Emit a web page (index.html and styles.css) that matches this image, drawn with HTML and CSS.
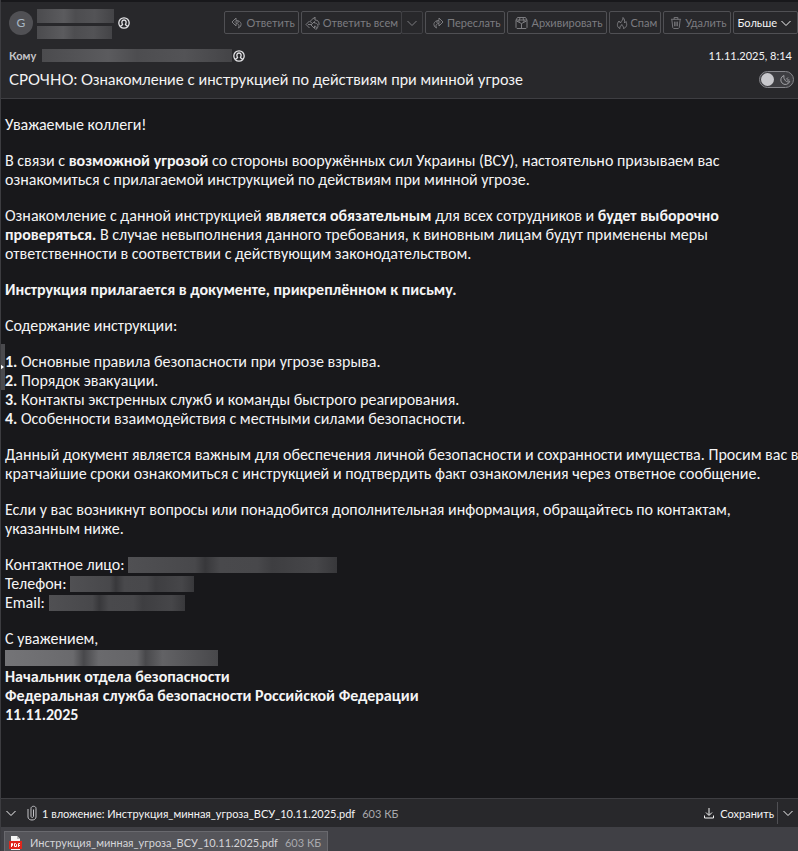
FILE: index.html
```html
<!DOCTYPE html>
<html lang="ru">
<head>
  <meta charset="UTF-8">
  <meta name="viewport" content="width=device-width, initial-scale=1.0">
  <title>СРОЧНО: Ознакомление с инструкцией по действиям при минной угрозе</title>
  <link rel="stylesheet" href="styles.css">
</head>
<body>
  <svg class="sprite" aria-hidden="true">
    <symbol id="i-reply" viewBox="0 0 12 12"><path d="M5 1 1 5l4 4V6.500C8 6.500 8.500 8.500 7.500 11 11.500 9 11 3.500 5 3.500zM3.500 5H8"/></symbol>
    <symbol id="i-reply-all" viewBox="0 0 15 14"><path d="M4.500 5 1 8.500 4.500 12M9 1.500 5 5.500 8 8M9.500 5.500 6 9l3.500 3.500V10c2 0 2 1.500 1.500 3.500 3.500-3 2-6.500-1.500-6.500zM10 1 8.500 3M10 1v3c3 0 4.500 2 4 5M3 8.500h3"/></symbol>
    <symbol id="i-person" viewBox="0 0 12 12"><circle cx="6" cy="6" r="5.200"/><path d="M2.500 9.800C2.500 8 4.600 8.300 4.600 7.500 3.200 5.500 3.800 3 6 3s2.800 2.500 1.400 4.500c0 .8 2.100.5 2.100 2.300"/></symbol>
    <symbol id="i-down" viewBox="0 0 12 12"><path d="m1.500 4 4.500 4.500L10.500 4"/></symbol>
  </svg>

  <main class="message">
    <header class="header">
      <div class="header-top">
        <div class="avatar">G</div>
        <div class="sender">
          <span class="redacted sender-name"></span>
          <span class="redacted sender-mail"></span>
        </div>
        <svg class="icon person"><use href="#i-person"/></svg>
        <div class="toolbar">
          <button type="button" class="tool"><svg class="icon"><use href="#i-reply"/></svg>Ответить</button>
          <div class="split">
            <button type="button" class="tool"><svg class="icon wide"><use href="#i-reply-all"/></svg>Ответить всем</button>
            <button type="button" class="tool arrow" aria-label="Другие варианты ответа"><svg class="icon"><use href="#i-down"/></svg></button>
          </div>
          <button type="button" class="tool"><svg class="icon flip"><use href="#i-reply"/></svg>Переслать</button>
          <button type="button" class="tool">
            <svg class="icon wide" viewBox="0 0 14 14"><path d="M1.500 4 3 1.500h8L12.500 4v7.500l-1 1h-9l-1-1zM1.500 4h11M5.500 1.500 5 4M8.500 1.500 9 4M2 5l5 2.500L12 5M7 7.500v5M4.500 4v2M9.500 4v2"/></svg>Архивировать
          </button>
          <button type="button" class="tool">
            <svg class="icon" viewBox="0 0 12 12"><path d="M7 .5C7.500 3 5 4 4.500 6L3 4C.5 7 1 10.500 4 11.500 3.500 9.500 5 8.500 6 7.500c0 1.500 2 2 1.500 4C11.500 10 11 7 10 4.500L8.500 6C8.800 4 8.500 2 7 .5z"/></svg>Спам
          </button>
          <button type="button" class="tool">
            <svg class="icon" viewBox="0 0 12 13"><path d="M.5 2.500h11M4 2.500v-2h4v2M1.500 3l1 8.500 1 1h5l1-1 1-8.500M4.500 5v5M6 5v5M7.500 5v5"/></svg>Удалить
          </button>
          <button type="button" class="tool more">Больше<svg class="icon"><use href="#i-down"/></svg></button>
        </div>
      </div>

      <div class="recipients">
        <span class="label">Кому</span>
        <span class="redacted recipient"></span>
        <svg class="icon person"><use href="#i-person"/></svg>
        <time class="date" datetime="2025-11-11T08:14">11.11.2025, 8:14</time>
      </div>

      <div class="subject-row">
        <h1 class="subject">СРОЧНО: Ознакомление с инструкцией по действиям при минной угрозе</h1>
        <button type="button" class="theme" aria-label="Тёмный режим">
          <span class="knob"></span>
          <svg class="icon" viewBox="0 0 12 12"><path d="M5 1.500a4.600 4.600 0 1 0 5.700 6C8 9 4 6 5 1.500zM7 5.500l2-2M8 6h2.500"/></svg>
        </button>
      </div>
    </header>

    <article class="body">
      <p>Уважаемые коллеги!</p>
      <p>В связи с <b>возможной угрозой</b> со стороны вооружённых сил Украины (ВСУ), настоятельно призываем вас<br>
        ознакомиться с прилагаемой инструкцией по действиям при минной угрозе.</p>
      <p>Ознакомление с данной инструкцией <b>является обязательным</b> для всех сотрудников и <b>будет выборочно<br>
        проверяться.</b> В случае невыполнения данного требования, к виновным лицам будут применены меры<br>
        ответственности в соответствии с действующим законодательством.</p>
      <p><b>Инструкция прилагается в документе, прикреплённом к письму.</b></p>
      <p>Содержание инструкции:</p>
      <p><b>1.</b> Основные правила безопасности при угрозе взрыва.<br>
        <b>2.</b> Порядок эвакуации.<br>
        <b>3.</b> Контакты экстренных служб и команды быстрого реагирования.<br>
        <b>4.</b> Особенности взаимодействия с местными силами безопасности.</p>
      <p>Данный документ является важным для обеспечения личной безопасности и сохранности имущества. Просим вас в<br>
        кратчайшие сроки ознакомиться с инструкцией и подтвердить факт ознакомления через ответное сообщение.</p>
      <p>Если у вас возникнут вопросы или понадобится дополнительная информация, обращайтесь по контактам,<br>
        указанным ниже.</p>
      <p>Контактное лицо: <span class="redacted contact-name"></span><br>
        Телефон: <span class="redacted contact-phone"></span><br>
        Email: <span class="redacted contact-mail"></span></p>
      <p>С уважением,<br>
        <span class="redacted signature"></span><br>
        <b>Начальник отдела безопасности<br>
        Федеральная служба безопасности Российской Федерации<br>
        11.11.2025</b></p>
      <button type="button" class="pane-handle" aria-label="Показать панель"></button>
    </article>

    <footer class="attachments">
      <div class="attach-bar">
        <button type="button" class="plain" aria-label="Свернуть"><svg class="icon"><use href="#i-down"/></svg></button>
        <svg class="icon clip" viewBox="0 0 10 16"><path d="M1 4v8c0 4 8 4 8 0V3.500c0-3-5-3-5 0V11c0 2 2.500 2 2.500 0V4.500"/></svg>
        <span class="attach-title">1 вложение: Инструкция_минная_угроза_ВСУ_10.11.2025.pdf</span>
        <span class="size">603 КБ</span>
        <button type="button" class="plain save">
          <svg class="icon" viewBox="0 0 12 12"><path d="M6 1v7M3 5.500 6 8.500l3-3M1.500 8.500v2.500h9V8.500"/></svg>Сохранить
        </button>
        <button type="button" class="plain save-more" aria-label="Другие варианты сохранения"><svg class="icon"><use href="#i-down"/></svg></button>
      </div>
      <div class="attach-list">
        <a class="file" href="#">
          <svg class="pdf" viewBox="0 0 13 14"><path fill="#f4f4f4" d="M2 0h6l3 3v11H2z"/><path fill="#bbb" d="M8 0v3h3z"/><path fill="#e0261b" d="M0 5h13v8H0z"/><path fill="none" stroke="#fff" d="M2.500 11V7.500h1v2h-1M5.500 7.500h1l1 1v2h-2zM9.500 11V7.500H11M9.500 9.500H11"/></svg>
          <span>Инструкция_минная_угроза_ВСУ_10.11.2025.pdf</span>
          <span class="size">603 КБ</span>
        </a>
      </div>
    </footer>
  </main>
</body>
</html>
```
FILE: styles.css
```css
* {
  box-sizing: border-box;
}
body {
  margin: 0;
  background: #18181b;
  color: #f4f4f5;
  font-family: Lato, "Noto Sans", sans-serif;
  font-size: 11px;
}
button {
  font: inherit;
  color: inherit;
  background: none;
  border: none;
  padding: 0;
}
.sprite {
  display: none;
}
.message {
  display: flex;
  flex-direction: column;
  min-height: 100vh;
  border-left: 1px solid #3c3c40;
  overflow: hidden;
}
.icon {
  width: 12px;
  height: 12px;
  flex: none;
  fill: none;
  stroke: currentColor;
}
.icon.wide {
  width: 15px;
  height: 14px;
}
.icon.flip {
  transform: scaleX(-1);
}

/* header */
.header {
  background: #28282b;
  border-top: 2px solid #18181b;
  border-bottom: 1px solid #3e3e42;
}
.header-top {
  display: flex;
  align-items: center;
  height: 41px;
  padding-left: 8px;
}
.avatar {
  width: 24px;
  height: 24px;
  border-radius: 50%;
  background: #505054;
  color: #a9b8c6;
  font-size: 12px;
  line-height: 24px;
  text-align: center;
}
.sender {
  display: flex;
  flex-direction: column;
  gap: 3px;
  margin: 2px 4px 0 4px;
}
.person {
  color: #e4e4e7;
  stroke-width: 1.3;
}
.redacted {
  display: inline-block;
  height: 14px;
  vertical-align: middle;
  background: linear-gradient(90deg, #4b4b4e, #5b5b5e 35%, #4d4d50 50%, #535356 75%, #444447);
}
.sender-name {
  width: 77px;
}
.sender-mail {
  width: 75px;
  height: 13px;
}
.toolbar {
  display: flex;
  gap: 2px;
  margin-left: auto;
}
.tool {
  display: flex;
  align-items: center;
  gap: 3px;
  height: 23px;
  padding: 0 3px 0 6px;
  border: 1px solid #505054;
  border-radius: 2px;
  color: #7c7c80;
  white-space: nowrap;
}
.split {
  display: flex;
}
.split .tool {
  padding-left: 3px;
}
.split .arrow {
  padding: 0 4px;
  margin-left: -1px;
  border-color: #404044;
}
.tool.more {
  color: #f4f4f5;
  padding: 0 5px 0 4px;
}
.recipients {
  display: flex;
  align-items: center;
  height: 25px;
  padding: 0 6px 0 8px;
}
.label {
  color: #c4c4c8;
  font-weight: 700;
}
.recipient {
  width: 190px;
  height: 13px;
  margin: 0 1px 0 6px;
}
.date {
  margin-left: auto;
}
.subject-row {
  display: flex;
  align-items: center;
  justify-content: space-between;
  padding: 1px 4px 8px 8px;
}
.subject {
  margin: 0;
  font-size: 15px;
  font-weight: 400;
  line-height: 21px;
  white-space: nowrap;
}
.theme {
  display: flex;
  align-items: center;
  justify-content: space-between;
  width: 35px;
  height: 17px;
  padding: 0 2px 0 1px;
  border: 1px solid #85858a;
  border-radius: 9px;
  background: #3e3e42;
  color: #a0a0a4;
}
.knob {
  width: 13px;
  height: 13px;
  border-radius: 50%;
  background: #c8c8cc;
}

/* letter */
.body {
  position: relative;
  flex: 1;
  padding: 16px 0 16px 4px;
  font-family: Calibri, Carlito, Lato, sans-serif;
  font-size: 16px;
  line-height: 19px;
  white-space: nowrap;
}
.body p {
  margin: 0 0 17px;
}
.body .redacted {
  height: 16px;
  vertical-align: top;
  margin-top: 2px;
  background: linear-gradient(90deg, #505053, #48484b 32%, #38383b 37%, #49494c 44%, #48484b 62%, #3e3e41 69%, #464649 90%, #38383b);
}
.contact-name {
  width: 209px;
}
.contact-phone {
  width: 124px;
}
.contact-mail {
  width: 136px;
}
.body .signature {
  width: 213px;
  background: linear-gradient(90deg, #747477, #6a6a6d 32%, #48484b 37%, #6a6a6d 44%, #656568 62%, #48484b 66%, #626265 74%, #48484b);
}
.pane-handle {
  position: absolute;
  left: -1px;
  top: 245px;
  width: 5px;
  height: 46px;
  background: #4a4a4e;
}
.pane-handle::before {
  content: "";
  display: block;
  width: 0;
  border: 3px solid transparent;
  border-left: 4px solid #fff;
  border-right: none;
}

/* attachments */
.attach-bar {
  display: flex;
  align-items: center;
  height: 29px;
  padding: 0 4px;
  background: #28282b;
  border-top: 1px solid #3e3e42;
  white-space: nowrap;
}
.plain {
  display: flex;
  align-items: center;
}
.clip {
  width: 10px;
  height: 16px;
  margin: 0 5px 0 10px;
  color: #c4c4c8;
}
.size {
  margin-left: 7px;
  color: #a9a9ad;
}
.save {
  gap: 5px;
  margin-left: auto;
}
.save-more {
  height: 22px;
  margin-left: 3px;
  padding-left: 4px;
  border-left: 1px solid #505054;
}
.attach-list {
  display: flex;
  padding: 4px 3px 0;
  background: #404045;
}
.file {
  display: flex;
  align-items: center;
  height: 20px;
  padding: 2px 6px 0 4px;
  border: 1px solid #69696e;
  border-bottom: none;
  background: #55555a;
  color: #d4d4d8;
  text-decoration: none;
  white-space: nowrap;
}
.pdf {
  width: 13px;
  height: 14px;
  margin-right: 8px;
}
```
